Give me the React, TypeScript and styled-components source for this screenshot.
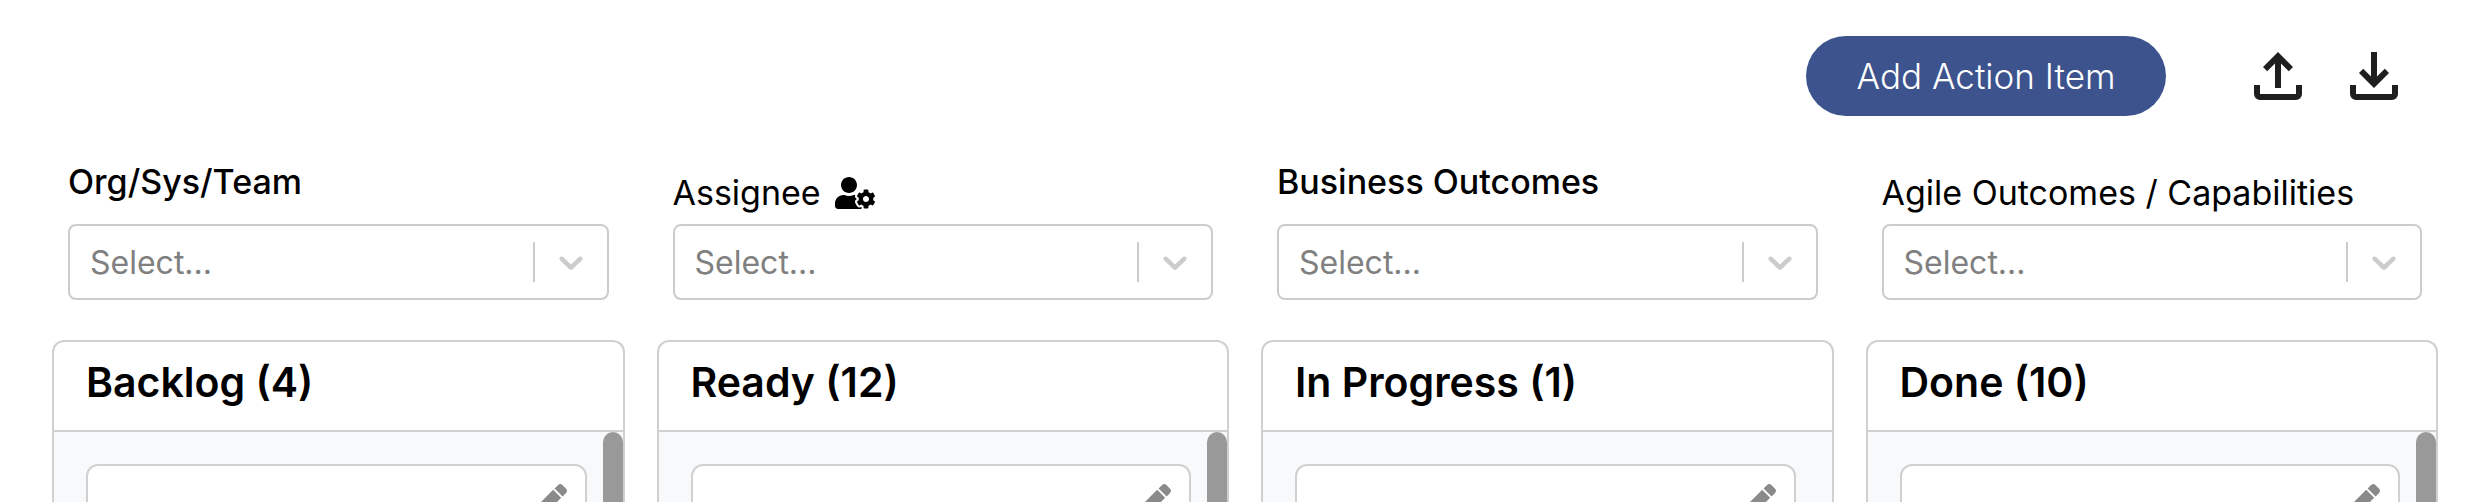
import React, { useId } from "react";
import styled, { createGlobalStyle } from "styled-components";
import { FaPen, FaUserCog } from "react-icons/fa";

const GlobalStyle = createGlobalStyle`
  *, *::before, *::after {
    box-sizing: border-box;
  }

  body {
    margin: 0;
    background: #ffffff;
    color: #000000;
    font-family: Inter, "Open Sans", sans-serif;
  }

  button, select {
    font: inherit;
  }
`;

const Page = styled.main`
  display: flex;
  flex-direction: column;
  height: 100vh;
  padding: 36px 36px 0 52px;
  overflow: hidden;
`;

const Toolbar = styled.header`
  display: flex;
  align-items: center;
  justify-content: flex-end;
  flex: none;
  height: 80px;
  padding-right: 28px;
`;

const AddButton = styled.button`
  min-width: 360px;
  height: 80px;
  margin-right: 76px;
  padding: 0 48px;
  border: 0;
  border-radius: 40px;
  background: #3c538e;
  color: #ffffff;
  font-size: 35px;
  font-weight: 300;
  line-height: 40px;
  white-space: nowrap;
  cursor: pointer;
`;

const IconGroup = styled.div`
  display: flex;
  gap: 24px;
`;

const IconButton = styled.button`
  display: flex;
  width: 72px;
  height: 72px;
  padding: 0;
  border: 0;
  background: none;
  color: #1f1f1f;
  cursor: pointer;
`;

const Filters = styled.form`
  display: grid;
  grid-template-columns: repeat(4, minmax(0, 1fr));
  gap: 32px;
  flex: none;
  margin-top: 42px;
`;

const Field = styled.div`
  display: flex;
  flex-direction: column;
  justify-content: flex-end;
  padding: 0 16px;
`;

const FieldLabel = styled.label<{ $strong?: boolean }>`
  display: flex;
  align-items: center;
  gap: 14px;
  margin-bottom: ${(p) => (p.$strong ? 18 : 7)}px;
  font-size: 34px;
  font-weight: ${(p) => (p.$strong ? 500 : 400)};
  line-height: 48px;
  white-space: nowrap;
`;

const AssigneeIcon = styled(FaUserCog)`
  width: 40px;
  height: 32px;
`;

const SelectBox = styled.div`
  display: flex;
  align-items: center;
  height: 76px;
  border: 2px solid #cccccc;
  border-radius: 8px;
`;

const SelectInput = styled.select`
  flex: 1;
  min-width: 0;
  height: 100%;
  padding: 0 0 0 20px;
  border: 0;
  appearance: none;
  background: transparent;
  color: #808080;
  font-size: 32px;
  outline: none;
`;

const Divider = styled.span`
  width: 2px;
  height: 40px;
  background: #cccccc;
`;

const Indicator = styled.span`
  display: flex;
  padding: 16px;
  color: #cccccc;
`;

const Board = styled.section`
  display: grid;
  grid-template-columns: repeat(4, minmax(0, 1fr));
  gap: 32px;
  flex: 1;
  min-height: 0;
  margin-top: 40px;
`;

const Column = styled.article`
  display: flex;
  flex-direction: column;
  min-height: 0;
  border: 2px solid #d0d0d0;
  border-bottom: 0;
  border-radius: 12px 12px 0 0;
  overflow: hidden;
`;

const ColumnTitle = styled.h2`
  flex: none;
  margin: 0;
  padding: 16px 32px 24px;
  border-bottom: 2px solid #d0d0d0;
  font-size: 41px;
  font-weight: 600;
  line-height: 48px;
  white-space: nowrap;
`;

const ColumnBody = styled.div`
  display: flex;
  flex: 1;
  min-height: 0;
  background: #f8f9fb;
  overflow: hidden;
`;

const CardList = styled.div`
  flex: 1;
  min-width: 0;
  padding: 32px 16px 0 32px;
`;

const Card = styled.div`
  display: flex;
  justify-content: flex-end;
  align-items: flex-start;
  height: 240px;
  padding: 18px;
  border: 2px solid #d0d0d0;
  border-radius: 12px;
  background: #ffffff;
`;

const EditButton = styled.button`
  display: flex;
  padding: 0;
  border: 0;
  background: none;
  color: #8a8a8a;
  cursor: pointer;
`;

const ScrollTrack = styled.div`
  width: 20px;
`;

const ScrollThumb = styled.div`
  height: 160px;
  border-radius: 10px;
  background: #999999;
`;

const TRAY =
  "M240-160q-33 0-56.500-23.500T160-240v-120h80v120h480v-120h80v120q0 33-23.500 56.500T720-160H240Z";

const UploadIcon = () => (
  <svg viewBox="0 -960 960 960" width="72" height="72" fill="currentColor" aria-hidden="true">
    <path d="M440-320v-326L336-542l-56-58 200-200 200 200-56 58-104-104v326h-80Z" />
    <path d={TRAY} />
  </svg>
);

const DownloadIcon = () => (
  <svg viewBox="0 -960 960 960" width="72" height="72" fill="currentColor" aria-hidden="true">
    <path d="M480-320 280-520l56-58 104 104v-326h80v326l104-104 56 58-200 200Z" />
    <path d={TRAY} />
  </svg>
);

const ChevronIcon = () => (
  <svg viewBox="0 0 20 20" width="40" height="40" fill="currentColor" aria-hidden="true">
    <path d="M4.516 7.548c0.436-0.446 1.043-0.481 1.576 0l3.908 3.747 3.908-3.747c0.533-0.481 1.141-0.446 1.574 0 0.436 0.445 0.408 1.197 0 1.615-0.406 0.418-4.695 4.502-4.695 4.502-0.217 0.223-0.502 0.335-0.787 0.335s-0.570-0.112-0.789-0.335c0 0-4.287-4.084-4.695-4.502s-0.436-1.170 0-1.615z" />
  </svg>
);

interface FilterProps {
  label: string;
  strong?: boolean;
  icon?: React.ReactNode;
}

const Filter = ({ label, strong, icon }: FilterProps) => {
  const id = useId();
  return (
    <Field>
      <FieldLabel htmlFor={id} $strong={strong}>
        {label}
        {icon}
      </FieldLabel>
      <SelectBox>
        <SelectInput id={id} defaultValue="">
          <option value="">Select...</option>
        </SelectInput>
        <Divider />
        <Indicator>
          <ChevronIcon />
        </Indicator>
      </SelectBox>
    </Field>
  );
};

const columns = [
  { name: "Backlog", count: 4, scrolls: true },
  { name: "Ready", count: 12, scrolls: true },
  { name: "In Progress", count: 1, scrolls: false },
  { name: "Done", count: 10, scrolls: true },
];

export default function App() {
  return (
    <>
      <GlobalStyle />
      <Page>
        <Toolbar>
          <AddButton type="button">Add Action Item</AddButton>
          <IconGroup>
            <IconButton type="button" aria-label="Upload">
              <UploadIcon />
            </IconButton>
            <IconButton type="button" aria-label="Download">
              <DownloadIcon />
            </IconButton>
          </IconGroup>
        </Toolbar>
        <Filters>
          <Filter label="Org/Sys/Team" strong />
          <Filter label="Assignee" icon={<AssigneeIcon />} />
          <Filter label="Business Outcomes" strong />
          <Filter label="Agile Outcomes / Capabilities" />
        </Filters>
        <Board>
          {columns.map(({ name, count, scrolls }) => (
            <Column key={name}>
              <ColumnTitle>{`${name} (${count})`}</ColumnTitle>
              <ColumnBody>
                <CardList>
                  <Card>
                    <EditButton type="button" aria-label="Edit">
                      <FaPen size={32} />
                    </EditButton>
                  </Card>
                </CardList>
                <ScrollTrack>{scrolls && <ScrollThumb />}</ScrollTrack>
              </ColumnBody>
            </Column>
          ))}
        </Board>
      </Page>
    </>
  );
}
